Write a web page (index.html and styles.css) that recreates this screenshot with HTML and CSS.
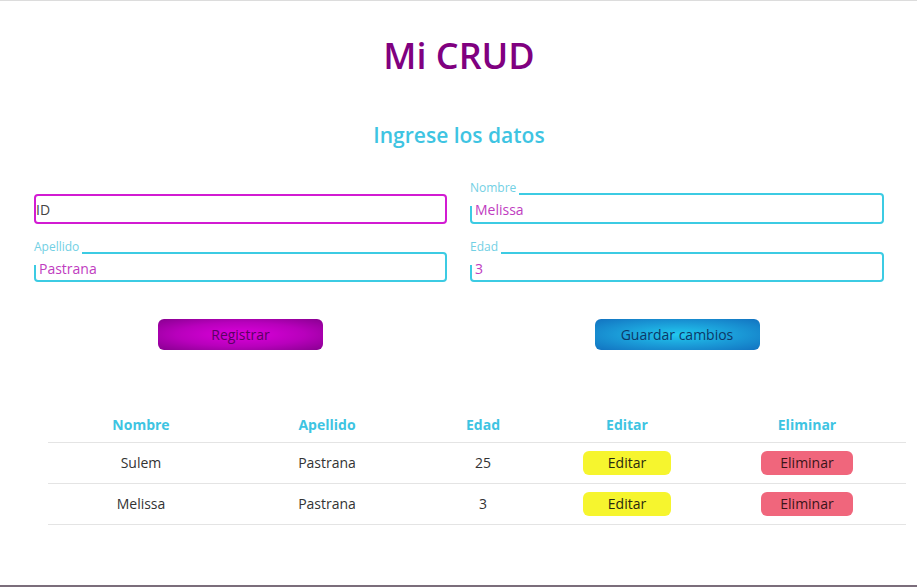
FILE: index.html
```html
<!DOCTYPE html>
<html lang="es">
<head>
<meta charset="utf-8">
<title>Mi CRUD</title>
<link rel="stylesheet" href="styles.css">
</head>
<body>
<main class="page">
  <h1 class="title">Mi CRUD</h1>
  <h2 class="subtitle">Ingrese los datos</h2>

  <form class="form">
    <fieldset class="field field-focus field-nolabel">
      <input class="field-input field-input-id" type="text" placeholder="ID">
    </fieldset>
    <fieldset class="field">
      <legend class="field-label">Nombre</legend>
      <input class="field-input" type="text" value="Melissa">
    </fieldset>
    <fieldset class="field">
      <legend class="field-label">Apellido</legend>
      <input class="field-input" type="text" value="Pastrana">
    </fieldset>
    <fieldset class="field">
      <legend class="field-label">Edad</legend>
      <input class="field-input" type="text" value="3">
    </fieldset>
    <div class="btn-cell"><button type="button" class="btn btn-register">Registrar</button></div>
    <div class="btn-cell"><button type="button" class="btn btn-save">Guardar cambios</button></div>
  </form>

  <table class="table">
    <thead>
      <tr>
        <th class="c1">Nombre</th>
        <th class="c2">Apellido</th>
        <th class="c3">Edad</th>
        <th class="c4">Editar</th>
        <th class="c5">Eliminar</th>
      </tr>
    </thead>
    <tbody>
      <tr>
        <td>Sulem</td>
        <td>Pastrana</td>
        <td>25</td>
        <td><button type="button" class="row-btn row-edit">Editar</button></td>
        <td><button type="button" class="row-btn row-delete">Eliminar</button></td>
      </tr>
      <tr>
        <td>Melissa</td>
        <td>Pastrana</td>
        <td>3</td>
        <td><button type="button" class="row-btn row-edit">Editar</button></td>
        <td><button type="button" class="row-btn row-delete">Eliminar</button></td>
      </tr>
    </tbody>
  </table>
</main>
<div class="bottom-bar"></div>
</body>
</html>
```

FILE: styles.css
```css
* { box-sizing: border-box; }

html, body { height: 100%; }

body {
  margin: 0;
  border-top: 1px solid #dcdcdc;
  background: #ffffff;
  font-family: "Open Sans", "Liberation Sans", sans-serif;
  color: #333333;
  display: flex;
  flex-direction: column;
}

.page {
  flex: 1;
  padding: 0 33px 0 34px;
}

.title {
  margin: 33px 0 0;
  text-align: center;
  font-size: 36px;
  line-height: 44px;
  font-weight: 600;
  color: #800080;
}

.subtitle {
  margin: 42px 0 0;
  text-align: center;
  font-size: 21px;
  line-height: 30px;
  font-weight: 600;
  color: #3ec4e2;
}

.form {
  margin-top: 32px;
  display: grid;
  grid-template-columns: 413px 414px;
  column-gap: 23px;
  row-gap: 17px;
}

.field {
  margin: 0;
  padding: 0 2px;
  border: 2px solid #3ccbe3;
  border-radius: 4px;
  min-width: 0;
}

.field-nolabel {
  margin-top: 12px;
}

.field-focus {
  border-color: #d21bd2;
}

.field-label {
  font-size: 12px;
  line-height: 12px;
  padding: 0 3px 12px 0;
  margin-left: -4px;
  margin-bottom: -8px;
  color: #72d0e4;
}

.field-input {
  display: block;
  width: 100%;
  border: 0;
  outline: none;
  background: transparent;
  padding: 0 1px;
  height: 23px;
  font-family: "Open Sans", "Liberation Sans", sans-serif;
  font-size: 14px;
  color: #c03cc0;
}

.field-input-id {
  height: 26px;
  padding-left: 0;
  margin-left: -2px;
}

.field-input-id::placeholder {
  color: #444444;
  opacity: 1;
}

.btn-cell {
  display: flex;
  justify-content: center;
  margin-top: 20px;
}

.btn {
  width: 165px;
  height: 31px;
  border: 0;
  border-radius: 6px;
  font-family: "Open Sans", "Liberation Sans", sans-serif;
  font-size: 14px;
  cursor: pointer;
}

.btn-register {
  background: radial-gradient(ellipse at center, #dc00dc 0%, #b800bc 55%, #880090 100%);
  color: #5c0064;
}

.btn-save {
  background: radial-gradient(ellipse at center, #22c8ee 0%, #1a98d6 55%, #1272c0 100%);
  color: #0c3868;
}

.table {
  margin: 56px 0 0 14px;
  width: 858px;
  border-collapse: collapse;
  font-size: 14px;
}

.table th {
  height: 36px;
  padding: 1px 0 0;
  font-weight: 700;
  color: #3ec4e2;
  text-align: center;
  border-bottom: 1px solid #e4e4e4;
}

.table td {
  height: 41px;
  padding: 0;
  text-align: center;
  border-bottom: 1px solid #e4e4e4;
  color: #333333;
}

.c1 { width: 186px; }
.c2 { width: 186px; }
.c3 { width: 126px; }
.c4 { width: 162px; }
.c5 { width: 198px; }

.row-btn {
  height: 24px;
  border: 0;
  border-radius: 6px;
  font-family: "Open Sans", "Liberation Sans", sans-serif;
  font-size: 14px;
  padding: 0;
  cursor: pointer;
  vertical-align: middle;
}

.row-edit {
  width: 88px;
  background: #f6f52e;
  color: #2a2a10;
}

.row-delete {
  width: 92px;
  background: #f0667c;
  color: #3a1418;
}

.bottom-bar {
  height: 2px;
  background: #7b6d7b;
}
```
